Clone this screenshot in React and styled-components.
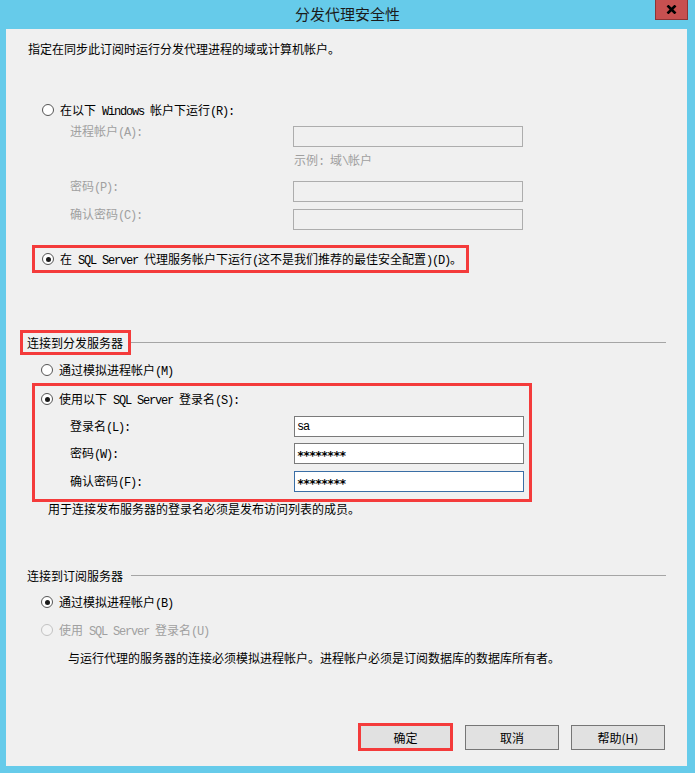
import React from "react";
import styled, { createGlobalStyle, css } from "styled-components";

const Global = createGlobalStyle`
  html, body { margin: 0; padding: 0; }
  body { background: #66cbea; font-family: "Noto Sans CJK SC", "Liberation Sans", sans-serif; }
`;

const Window = styled.div`
  width: 695px;
  height: 773px;
  background: #66cbea;
  display: flex;
  flex-direction: column;
  box-sizing: border-box;
`;

const TitleBar = styled.div`
  height: 29px;
  display: grid;
  grid-template-columns: 1fr auto 1fr;
  align-items: start;
`;

const Title = styled.div`
  grid-column: 2;
  font-family: "Noto Sans CJK SC", sans-serif;
  font-size: 15px;
  line-height: 28px;
  color: #1b1b1b;
`;

const CloseButton = styled.div`
  grid-column: 3;
  justify-self: end;
  margin-right: 7px;
  width: 33px;
  height: 20px;
  box-sizing: border-box;
  background: #c75050;
  border: 1px solid #8c3535;
  border-top: none;
  display: flex;
  align-items: center;
  justify-content: center;
`;

const Client = styled.div`
  margin: 0 8px 0 6px;
  height: 737px;
  background: #f0f0f0;
  display: flex;
  flex-direction: column;
  padding: 0 21px 0 22px;
  box-sizing: border-box;
  font-size: 12px;
  color: #000;
`;

const Line = styled.div`
  margin-top: ${(p) => p.$mt || 0}px;
  margin-left: ${(p) => p.$ml || 0}px;
  height: ${(p) => p.$h || 14}px;
  line-height: ${(p) => p.$h || 14}px;
  white-space: nowrap;
  color: ${(p) => (p.$disabled ? "#a0a0a0" : "#000")};
`;

const Lat = styled.span`
  font-family: "Liberation Mono", "DejaVu Sans Mono", monospace;
  font-size: 12px;
  letter-spacing: -1.2px;
  white-space: pre;
`;

const Stars = styled.span`
  display: inline-block;
  font-family: "DejaVu Sans Mono", monospace;
  font-size: 12px;
  font-weight: bold;
  letter-spacing: -1.2px;
  line-height: 12px;
  padding-top: 4px;
  white-space: pre;
`;

const T = ({ children }) => {
  const parts = String(children).split(/([\x20-\x7e]+)/);
  return parts.map((p, i) =>
    /^[\x20-\x7e]+$/.test(p) ? <Lat key={i}>{p}</Lat> : p
  );
};

const RadioRow = styled.div`
  display: flex;
  align-items: center;
  gap: 6px;
  height: 16px;
  margin-top: ${(p) => p.$mt || 0}px;
  margin-left: ${(p) => p.$ml || 0}px;
  white-space: nowrap;
  color: ${(p) => (p.$disabled ? "#a0a0a0" : "#000")};
`;

const RadioCircle = styled.span`
  width: 12px;
  height: 12px;
  box-sizing: border-box;
  border-radius: 50%;
  border: 1px solid ${(p) => (p.$disabled ? "#c2c2c2" : "#555")};
  background: ${(p) => (p.$disabled ? "#f4f4f4" : "#fff")};
  display: flex;
  align-items: center;
  justify-content: center;
  flex: none;
  &::after {
    content: "";
    width: 5px;
    height: 5px;
    border-radius: 50%;
    background: #1a1a1a;
    display: ${(p) => (p.$checked ? "block" : "none")};
  }
`;

const Radio = ({ checked, disabled, label, mt, ml }) => (
  <RadioRow $mt={mt} $ml={ml} $disabled={disabled}>
    <RadioCircle $checked={checked} $disabled={disabled} />
    <span><T>{label}</T></span>
  </RadioRow>
);

const FieldRow = styled.div`
  display: flex;
  align-items: ${(p) => (p.$top ? "flex-start" : "center")};
  margin-top: ${(p) => p.$mt || 0}px;
  margin-left: ${(p) => p.$ml || 0}px;
`;

const Label = styled.div`
  width: ${(p) => p.$w}px;
  flex: none;
  white-space: nowrap;
  line-height: ${(p) => (p.$top ? 10 : 14)}px;
  color: ${(p) => (p.$disabled ? "#a0a0a0" : "#000")};
`;

const Field = styled.div`
  width: 230px;
  height: 21px;
  box-sizing: border-box;
  padding-left: 2px;
  display: flex;
  align-items: center;
  ${(p) =>
    p.$disabled
      ? css`
          border: 1px solid #adadad;
          background: #f0f0f0;
        `
      : css`
          border: 1px solid ${p.$focused ? "#3a6ea5" : "#7a7a7a"};
          background: #fff;
        `}
`;

const Highlight = styled.div`
  align-self: flex-start;
  border: 3px solid #f43b3b;
  margin-top: ${(p) => p.$mt || 0}px;
  margin-left: ${(p) => p.$ml || 0}px;
  padding: ${(p) => p.$pad};
  ${(p) => p.$w && css`width: ${p.$w}px;`}
  box-sizing: border-box;
  display: flex;
  flex-direction: column;
`;

const GroupHeader = styled.div`
  display: flex;
  align-items: center;
  margin-top: ${(p) => p.$mt}px;
  margin-left: -8px;
`;

const Caption = styled.div`
  height: 25px;
  box-sizing: border-box;
  border: 3px solid ${(p) => (p.$marked ? "#f43b3b" : "transparent")};
  padding: 0 5px 0 4px;
  line-height: 19px;
  white-space: nowrap;
`;

const Rule = styled.div`
  flex: 1;
  height: 1px;
  background: #a5a5a5;
`;

const Buttons = styled.div`
  margin-top: auto;
  margin-bottom: 15px;
  margin-right: 1px;
  display: flex;
  justify-content: flex-end;
  align-items: center;
  gap: 12px;
`;

const Button = styled.div`
  width: ${(p) => (p.$marked ? 95 : 94)}px;
  height: ${(p) => (p.$marked ? 28 : 25)}px;
  box-sizing: border-box;
  border: ${(p) => (p.$marked ? "3px solid #f43b3b" : "1px solid #767676")};
  background: #e1e1e1;
  display: flex;
  align-items: center;
  justify-content: center;
  font-size: 12px;
  color: #000;
`;

export default function App() {
  return (
    <>
      <Global />
      <Window>
        <TitleBar>
          <Title>分发代理安全性</Title>
          <CloseButton>
            <svg width="11" height="9" viewBox="0 0 11 9">
              <path d="M1.5 0.5 L9.5 8.5 M9.5 0.5 L1.5 8.5" stroke="#000" strokeWidth="2.6" />
            </svg>
          </CloseButton>
        </TitleBar>
        <Client>
          <Line $mt={12} $h={16}>指定在同步此订阅时运行分发代理进程的域或计算机帐户。</Line>

          <Radio mt={45} ml={14} label="在以下 Windows 帐户下运行(R):" />

          <FieldRow $top $mt={8} $ml={42}>
            <Label $top $disabled $w={223}><T>进程帐户(A):</T></Label>
            <Field $disabled />
          </FieldRow>
          <Line $mt={6} $ml={266} $disabled><T>示例: 域\帐户</T></Line>
          <FieldRow $top $mt={14} $ml={42}>
            <Label $top $disabled $w={223}><T>密码(P):</T></Label>
            <Field $disabled />
          </FieldRow>
          <FieldRow $top $mt={7} $ml={42}>
            <Label $top $disabled $w={223}><T>确认密码(C):</T></Label>
            <Field $disabled />
          </FieldRow>

          <Highlight $mt={15} $ml={4} $pad="3px 4px 3px 7px">
            <Radio checked label="在 SQL Server 代理服务帐户下运行(这不是我们推荐的最佳安全配置)(D)。" />
          </Highlight>

          <GroupHeader $mt={57}>
            <Caption $marked>连接到分发服务器</Caption>
            <Rule />
          </GroupHeader>

          <Radio mt={7} ml={13} label="通过模拟进程帐户(M)" />

          <Highlight $mt={5} $ml={4} $w={500} $pad="5px 0 7px 6px">
            <Radio checked label="使用以下 SQL Server 登录名(S):" />
            <FieldRow $mt={9} $ml={29}>
              <Label $w={224}><T>登录名(L):</T></Label>
              <Field><Lat>sa</Lat></Field>
            </FieldRow>
            <FieldRow $mt={6} $ml={29}>
              <Label $w={224}><T>密码(W):</T></Label>
              <Field><Stars>********</Stars></Field>
            </FieldRow>
            <FieldRow $mt={7} $ml={29}>
              <Label $w={224}><T>确认密码(F):</T></Label>
              <Field $focused><Stars>********</Stars></Field>
            </FieldRow>
          </Highlight>

          <Line $ml={20}>用于连接发布服务器的登录名必须是发布访问列表的成员。</Line>

          <GroupHeader $mt={47}>
            <Caption>连接到订阅服务器</Caption>
            <Rule />
          </GroupHeader>

          <Radio mt={6} ml={13} checked label="通过模拟进程帐户(B)" />
          <Radio mt={12} ml={13} disabled label="使用 SQL Server 登录名(U)" />

          <Line $mt={13} $ml={40}>与运行代理的服务器的连接必须模拟进程帐户。进程帐户必须是订阅数据库的数据库所有者。</Line>

          <Buttons>
            <Button $marked>确定</Button>
            <Button>取消</Button>
            <Button>帮助(H)</Button>
          </Buttons>
        </Client>
      </Window>
    </>
  );
}
